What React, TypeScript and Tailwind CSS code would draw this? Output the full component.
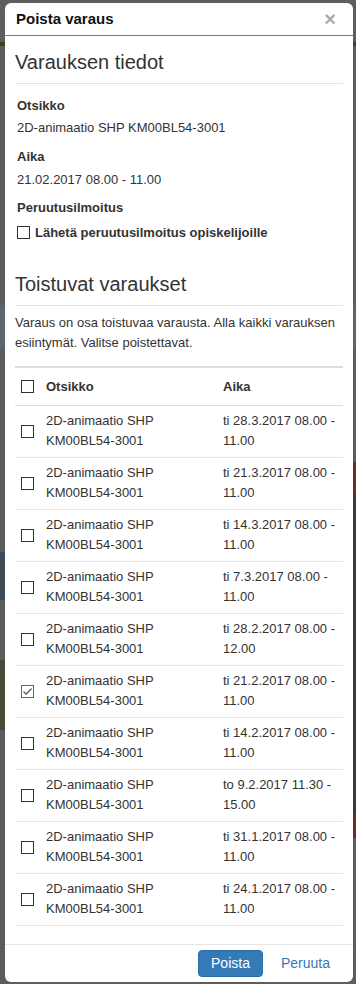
import React from "react";

type Occurrence = { title: string; time: string; checked?: boolean };

const occurrences: Occurrence[] = [
  { title: "2D-animaatio SHP KM00BL54-3001", time: "ti 28.3.2017 08.00 - 11.00" },
  { title: "2D-animaatio SHP KM00BL54-3001", time: "ti 21.3.2017 08.00 - 11.00" },
  { title: "2D-animaatio SHP KM00BL54-3001", time: "ti 14.3.2017 08.00 - 11.00" },
  { title: "2D-animaatio SHP KM00BL54-3001", time: "ti 7.3.2017 08.00 - 11.00" },
  { title: "2D-animaatio SHP KM00BL54-3001", time: "ti 28.2.2017 08.00 - 12.00" },
  { title: "2D-animaatio SHP KM00BL54-3001", time: "ti 21.2.2017 08.00 - 11.00", checked: true },
  { title: "2D-animaatio SHP KM00BL54-3001", time: "ti 14.2.2017 08.00 - 11.00" },
  { title: "2D-animaatio SHP KM00BL54-3001", time: "to 9.2.2017 11.30 - 15.00" },
  { title: "2D-animaatio SHP KM00BL54-3001", time: "ti 31.1.2017 08.00 - 11.00" },
  { title: "2D-animaatio SHP KM00BL54-3001", time: "ti 24.1.2017 08.00 - 11.00" },
];

function Box({ checked }: { checked?: boolean }) {
  return (
    <span
      className={
        "flex w-[13px] h-[13px] shrink-0 items-center justify-center bg-white border " +
        (checked ? "border-[#666]" : "border-[#333]")
      }
    >
      {checked && (
        <svg width="11" height="11" viewBox="0 0 11 11">
          <polyline points="1.5,5.5 4.2,8.2 9.5,2.5" fill="none" stroke="#555" strokeWidth="1.2" />
        </svg>
      )}
    </span>
  );
}

// page behind the dimmed overlay, only slivers of it show at the edges
function Backdrop() {
  return (
    <div className="flex h-full w-full bg-[#5e5e5e]">
      <div className="flex w-[5px] flex-col">
        <div className="h-[42px] bg-[#5e5e5e]" />
        <div className="h-[4px] bg-[#2f4a22]" />
        <div className="h-[259px] bg-[#5c5c5c]" />
        <div className="h-[44px] bg-[#5b6570]" />
        <div className="h-[203px] bg-[#5c5c5c]" />
        <div className="h-[48px] bg-[#3d4a55]" />
        <div className="h-[60px] bg-[#5c5c5c]" />
        <div className="h-[70px] bg-[#4b4a38]" />
        <div className="flex-1 bg-[#5c5c5c]" />
      </div>
      <div className="flex-1" />
      <div className="flex w-[3px] flex-col">
        <div className="h-[42px] bg-[#5e5e5e]" />
        <div className="h-[4px] bg-[#2f4a22]" />
        <div className="h-[259px] bg-[#5c5c5c]" />
        <div className="h-[44px] bg-[#5b6570]" />
        <div className="h-[113px] bg-[#5c5c5c]" />
        <div className="h-[31px] bg-[#6b2d2a]" />
        <div className="h-[320px] bg-[#403834]" />
        <div className="h-[25px] bg-[#6b2d2a]" />
        <div className="flex-1 bg-[#5c5c5c]" />
      </div>
    </div>
  );
}

export default function App() {
  return (
    <div className="relative h-[984px] w-[356px] overflow-hidden font-['Liberation_Sans',Arial,sans-serif] text-[13px] text-[#333]">
      <Backdrop />

      <div className="absolute left-[5px] top-[3px] w-[348px] rounded-[6px] bg-white">
        <div className="flex h-[33px] items-center justify-between border-b border-[#5b9a32] pl-[11px] pr-[17px]">
          <h4 className="text-[15px] font-bold text-[#111]">Poista varaus</h4>
          <span className="text-[20px] font-bold leading-none text-[#aaa]">×</span>
        </div>

        <div className="px-[10px] pt-[11px] pb-[18px]">
          <h3 className="text-[20px] leading-[30px]">Varauksen tiedot</h3>
          <div className="mt-[6px] h-px bg-[#e3e3e3]" />

          <div className="pl-[2px] leading-[20px]">
            <div className="mt-[12px] font-bold">Otsikko</div>
            <div className="mt-[2px]">2D-animaatio SHP KM00BL54-3001</div>
            <div className="mt-[9px] font-bold">Aika</div>
            <div className="mt-[3px]">21.02.2017 08.00 - 11.00</div>
            <div className="mt-[8px] font-bold">Peruutusilmoitus</div>
            <label className="mt-[3px] flex items-center gap-[5px] font-bold">
              <Box />
              <span className="pt-[2px]">Lähetä peruutusilmoitus opiskelijoille</span>
            </label>
          </div>

          <h3 className="mt-[26px] text-[20px] leading-[30px]">Toistuvat varaukset</h3>
          <div className="mt-[6px] h-px bg-[#e3e3e3]" />
          <p className="mt-[7px] leading-[20px]">
            Varaus on osa toistuvaa varausta. Alla kaikki varauksen esiintymät. Valitse poistettavat.
          </p>

          <div className="mt-[13px] leading-[20px]">
            <div className="grid h-[40px] grid-cols-[26px_177px_125px] items-center border-t-2 border-b border-[#ddd] font-bold">
              <div className="pl-[6px]">
                <Box />
              </div>
              <div className="pl-[5px]">Otsikko</div>
              <div className="pl-[5px]">Aika</div>
            </div>
            {occurrences.map((o, i) => (
              <div
                key={i}
                className="grid h-[52px] grid-cols-[26px_177px_125px] border-b border-[#e5e5e5] pt-[5px] pb-[6px]"
              >
                <div className="self-center pl-[6px]">
                  <Box checked={o.checked} />
                </div>
                <div className="pl-[5px]">{o.title}</div>
                <div className="pl-[5px] pr-[5px]">{o.time}</div>
              </div>
            ))}
          </div>
        </div>

        <div className="flex justify-end border-t border-[#e5e5e5] pt-[5px] pb-[5px] pr-[11px] text-[14px]">
          <button className="h-[27px] rounded-[4px] border border-[#2e6da4] bg-[#337ab7] px-[12px] text-white">
            Poista
          </button>
          <button className="ml-[6px] h-[27px] px-[12px] text-[#337ab7]">Peruuta</button>
        </div>
      </div>
    </div>
  );
}
